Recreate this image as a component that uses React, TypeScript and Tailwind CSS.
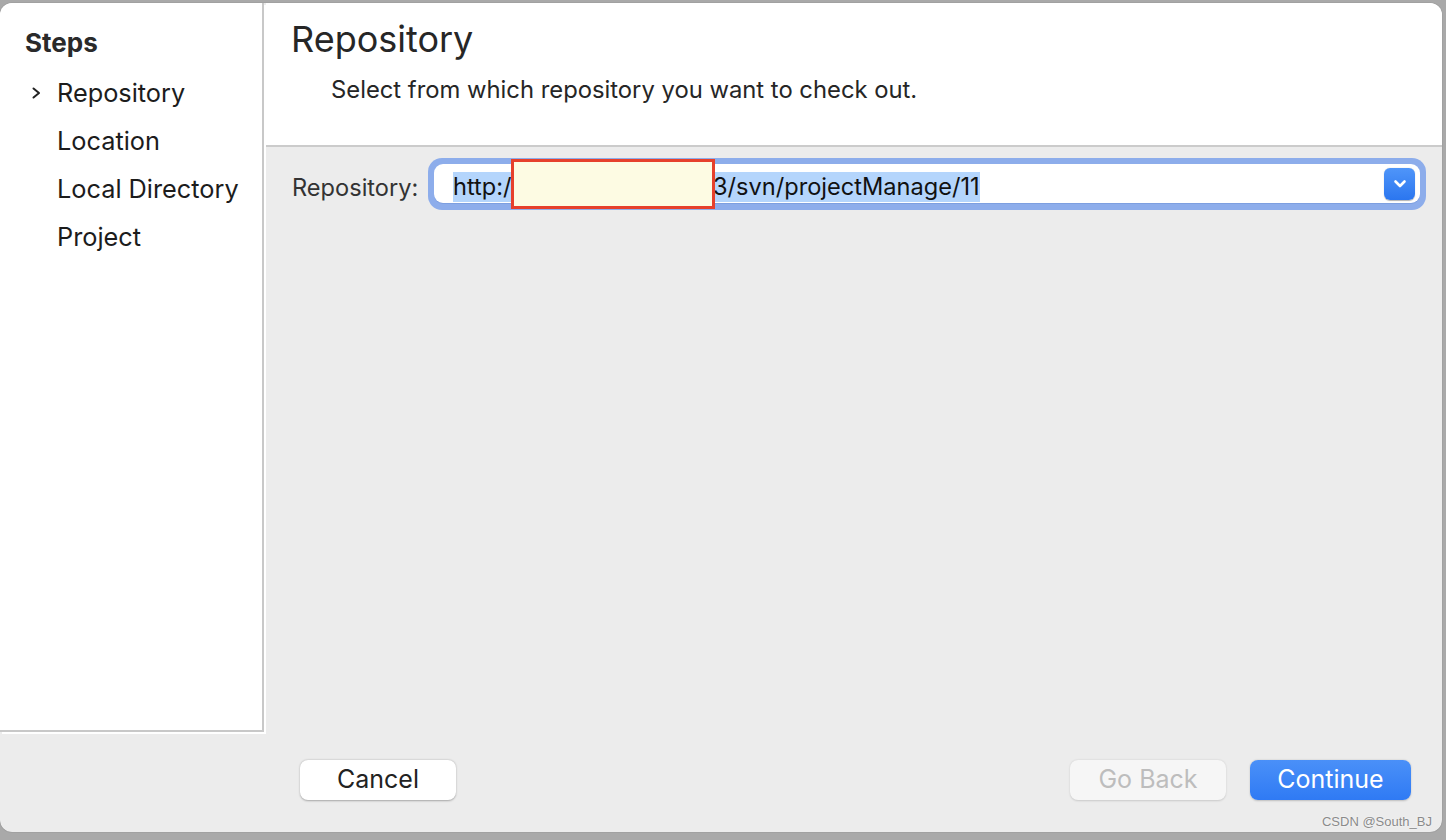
import React from "react";

const font = { fontFamily: 'Inter, "Noto Sans", "Liberation Sans", sans-serif' };

function ChevronRight() {
  return (
    <svg width="11" height="12" viewBox="0 0 11 12" className="shrink-0">
      <path d="M2.5 1.5 L8 6 L2.5 10.5" fill="none" stroke="#222" strokeWidth="2" strokeLinecap="round" strokeLinejoin="round" />
    </svg>
  );
}

function ChevronDown() {
  return (
    <svg width="14" height="10" viewBox="0 0 14 10">
      <path d="M2.5 2.5 L7 7 L11.5 2.5" fill="none" stroke="#ffffff" strokeWidth="2.6" strokeLinecap="round" strokeLinejoin="round" />
    </svg>
  );
}

export default function App() {
  const steps = ["Repository", "Location", "Local Directory", "Project"];
  return (
    <div className="w-[1446px] h-[840px] bg-[#a9a9a9] pt-[3px] overflow-hidden" style={font}>
      <div className="relative w-[1442px] h-[829px] bg-[#ececec] rounded-[12px] overflow-hidden flex flex-col shadow-[0_0_1px_rgba(0,0,0,0.45)]">
        <div className="flex h-[729px] shrink-0">
          <aside className="w-[264px] shrink-0 bg-white border-r-2 border-b-2 border-[#c8c8c8] shadow-[2px_2px_0_0_#ffffff] pt-[24px]">
            <div className="pl-[25px] text-[26px] leading-[32px] font-bold text-[#2a2a2a]">Steps</div>
            <ul className="mt-[10px]">
              {steps.map((s, i) => (
                <li key={s} className="h-[48px] flex items-center pl-[31px] text-[25.3px] text-[#1c1c1c]">
                  <span className="w-[26px] flex items-center">{i === 0 ? <ChevronRight /> : null}</span>
                  <span>{s}</span>
                </li>
              ))}
            </ul>
          </aside>
          <main className="flex-1 ml-[2px] flex flex-col min-w-0">
            <header className="h-[144px] shrink-0 bg-white border-b-2 border-[#cbcbcb] pt-[16px] pl-[25px]">
              <h1 className="text-[36px] leading-[40px] text-[#262626]">Repository</h1>
              <p className="mt-[17px] pl-[40px] text-[23.8px] leading-[28px] text-[#262626]">
                Select from which repository you want to check out.
              </p>
            </header>
            <div className="flex items-start pl-[26px] pr-[16px] pt-[11px]">
              <label className="mt-[16px] w-[136px] shrink-0 text-[23.6px] leading-[28px] text-[#333333]">Repository:</label>
              <div className="relative flex-1 h-[52px] rounded-[14px] bg-[#8dadeb] p-[6px] pb-[7px]">
                <div className="h-full rounded-[9px] bg-white flex items-center pl-[19px] pr-[5px] shadow-[0_1px_0_0_#7d9fe0]">
                  <div className="flex items-center h-[30px] mt-[6px] bg-[#b4d5fc] text-[23.6px] text-[#111111] leading-[30px]">
                    <span className="inline-block w-[58px] whitespace-nowrap">http:/</span>
                    <span className="inline-block w-[202px]" />
                    <span className="whitespace-nowrap">3/svn/projectManage/11</span>
                  </div>
                  <div className="ml-auto w-[31px] h-[32px] rounded-[6px] bg-gradient-to-b from-[#4f95f9] to-[#2b76ef] flex items-center justify-center shadow-[0_0.5px_1px_rgba(0,0,0,0.3)]">
                    <ChevronDown />
                  </div>
                </div>
                <div className="absolute left-[83px] top-[1px] w-[204px] h-[50px] border-[3px] border-[#e6402c] bg-[#fdfbe3]" />
              </div>
            </div>
          </main>
        </div>
        <footer className="flex items-start pt-[28px] pl-[300px] pr-[31px]">
          <button className="w-[156px] h-[40px] rounded-[8px] bg-white text-[25px] text-[#222222] shadow-[0_0.5px_2px_rgba(0,0,0,0.3)]">
            Cancel
          </button>
          <button className="ml-auto w-[156px] h-[40px] rounded-[8px] bg-[#f6f6f6] text-[25px] text-[#bdbdbd] shadow-[0_0.5px_2px_rgba(0,0,0,0.15)]">
            Go Back
          </button>
          <button className="ml-[24px] w-[161px] h-[40px] rounded-[8px] bg-gradient-to-b from-[#4a90f8] to-[#2f7af4] text-[25px] text-white shadow-[0_0.5px_2px_rgba(0,0,0,0.2)]">
            Continue
          </button>
        </footer>
        <div className="absolute right-[10px] bottom-[1px] text-[13px] text-[#8a8a8a] [text-shadow:0_0_2px_#ffffff]" style={{ fontFamily: '"Liberation Sans", Arial, sans-serif' }}>
          CSDN @South_BJ
        </div>
      </div>
    </div>
  );
}
